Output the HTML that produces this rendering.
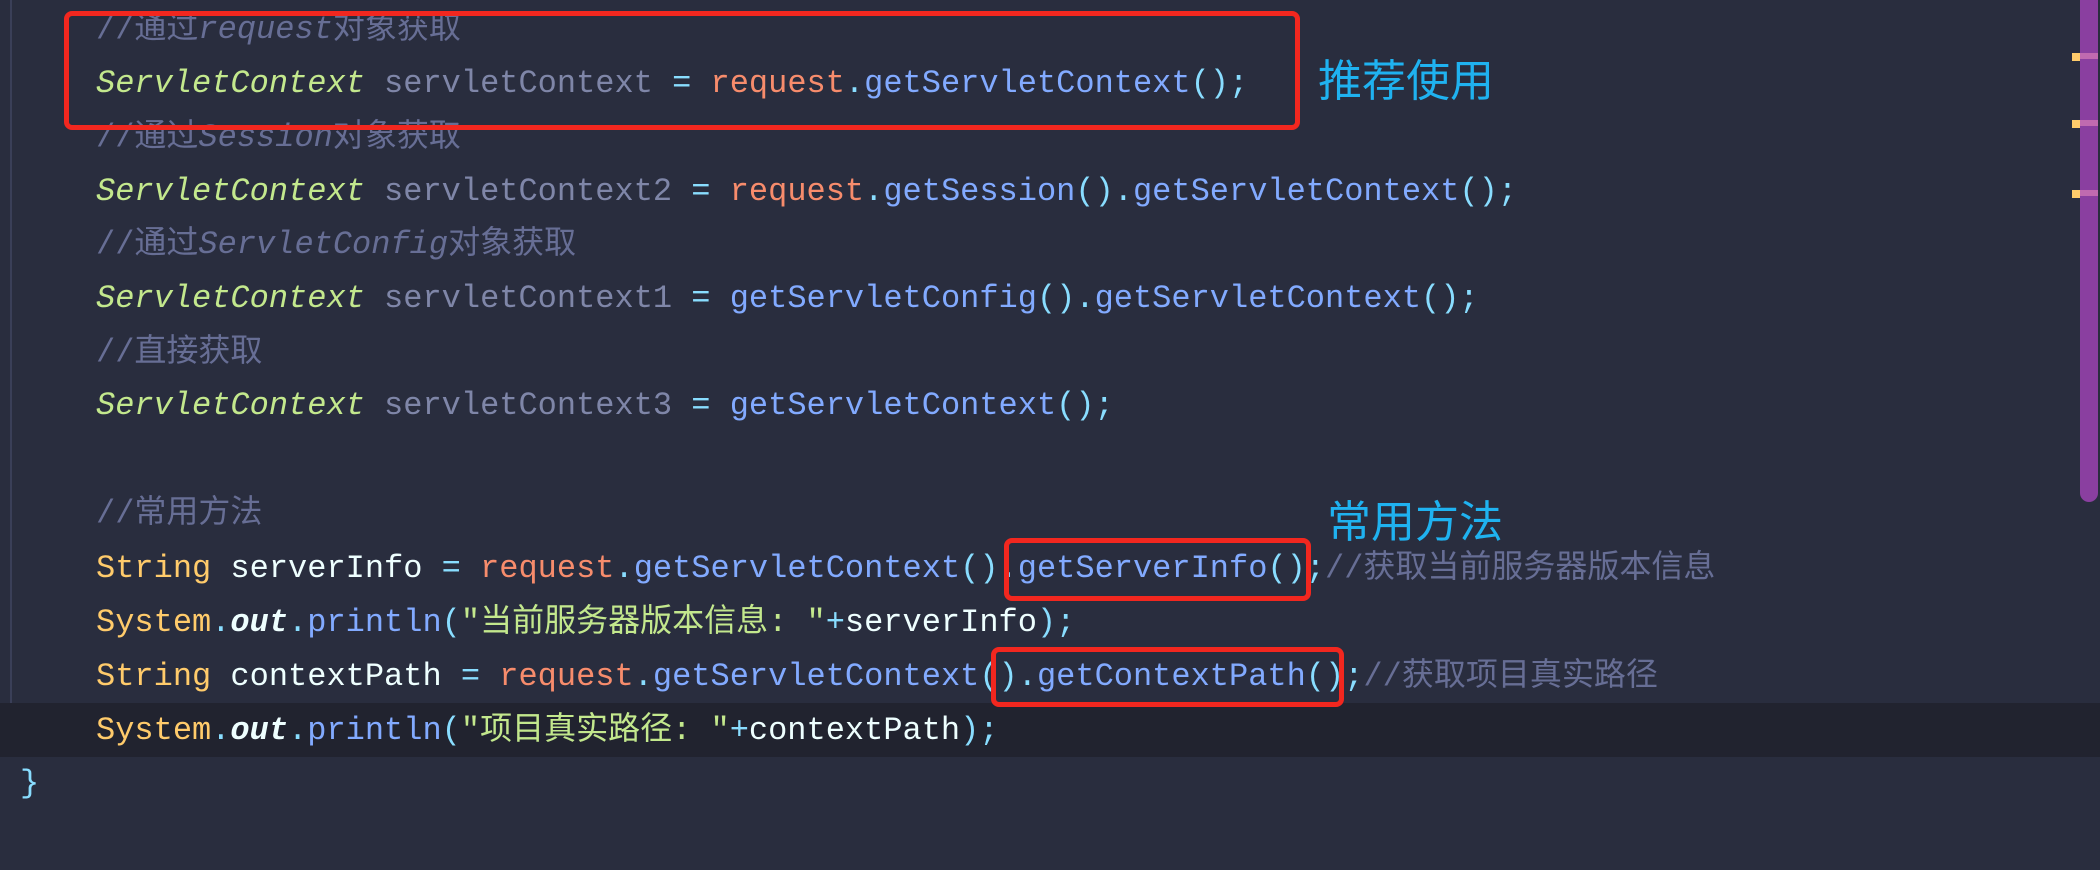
<!DOCTYPE html>
<html><head><meta charset="utf-8"><style>
body{margin:0;width:2100px;height:870px;background:#292d3e;overflow:hidden;position:relative;font-family:"Liberation Mono","Noto Sans CJK SC",monospace;font-size:32px}
.l{position:absolute;left:96px;height:54px;line-height:54px;white-space:pre}
.c{color:#676e95}.c i{font-style:italic}
.t{color:#c3e88d;font-style:italic}
.v{color:#7f86a8}
.o{color:#89ddff}
.r{color:#f78c6c}
.m{color:#82aaff}
.y{color:#ffcb6b}
.w{color:#eeffff}
.s{color:#c3e88d}
.b{color:#eeffff;font-style:italic;font-weight:bold}
.box{position:absolute;border:5px solid #f2271f;border-radius:8px;box-sizing:border-box}
.lab{position:absolute;color:#1fb2f0;font-family:"Noto Sans CJK SC",sans-serif;font-size:44px;line-height:50px}
</style></head><body>
<div style="position:absolute;left:10px;top:0;width:2px;height:757px;background:#3a3f58"></div>
<div style="position:absolute;left:0;top:703px;width:2100px;height:54px;background:#21232f"></div>
<div style="position:absolute;left:2080px;top:0;width:18px;height:502px;background:#8a3fa0;border-radius:0 0 9px 9px"></div>
<div style="position:absolute;left:2072px;top:53px;width:8px;height:8px;background:#ffcb6b"></div>
<div style="position:absolute;left:2080px;top:53px;width:18px;height:6px;background:#c06ab0"></div>
<div style="position:absolute;left:2072px;top:120px;width:8px;height:8px;background:#ffcb6b"></div>
<div style="position:absolute;left:2080px;top:120px;width:18px;height:6px;background:#c06ab0"></div>
<div style="position:absolute;left:2072px;top:190px;width:8px;height:8px;background:#ffcb6b"></div>
<div style="position:absolute;left:2080px;top:190px;width:18px;height:6px;background:#c06ab0"></div>

<div class="l c" style="top:3px">//通过<i>request</i>对象获取</div>
<div class="l" style="top:57px"><span class="t">ServletContext</span> <span class="v">servletContext</span> <span class="o">=</span> <span class="r">request</span><span class="o">.</span><span class="m">getServletContext</span><span class="o">();</span></div>
<div class="l c" style="top:111px">//通过<i>Session</i>对象获取</div>
<div class="l" style="top:165px"><span class="t">ServletContext</span> <span class="v">servletContext2</span> <span class="o">=</span> <span class="r">request</span><span class="o">.</span><span class="m">getSession</span><span class="o">().</span><span class="m">getServletContext</span><span class="o">();</span></div>
<div class="l c" style="top:218px">//通过<i>ServletConfig</i>对象获取</div>
<div class="l" style="top:272px"><span class="t">ServletContext</span> <span class="v">servletContext1</span> <span class="o">=</span> <span class="m">getServletConfig</span><span class="o">().</span><span class="m">getServletContext</span><span class="o">();</span></div>
<div class="l c" style="top:326px">//直接获取</div>
<div class="l" style="top:379px"><span class="t">ServletContext</span> <span class="v">servletContext3</span> <span class="o">=</span> <span class="m">getServletContext</span><span class="o">();</span></div>
<div class="l c" style="top:487px">//常用方法</div>
<div class="l" style="top:542px"><span class="y">String</span> <span class="w">serverInfo</span> <span class="o">=</span> <span class="r">request</span><span class="o">.</span><span class="m">getServletContext</span><span class="o">().</span><span class="m">getServerInfo</span><span class="o">();</span><span class="c">//获取当前服务器版本信息</span></div>
<div class="l" style="top:596px"><span class="y">System</span><span class="o">.</span><span class="b">out</span><span class="o">.</span><span class="m">println</span><span class="o">(</span><span class="s">"当前服务器版本信息: "</span><span class="o">+</span><span class="w">serverInfo</span><span class="o">);</span></div>
<div class="l" style="top:650px"><span class="y">String</span> <span class="w">contextPath</span> <span class="o">=</span> <span class="r">request</span><span class="o">.</span><span class="m">getServletContext</span><span class="o">().</span><span class="m">getContextPath</span><span class="o">();</span><span class="c">//获取项目真实路径</span></div>
<div class="l" style="top:704px"><span class="y">System</span><span class="o">.</span><span class="b">out</span><span class="o">.</span><span class="m">println</span><span class="o">(</span><span class="s">"项目真实路径: "</span><span class="o">+</span><span class="w">contextPath</span><span class="o">);</span></div>
<div class="l o" style="top:757px;left:20px">}</div>

<div class="box" style="left:64px;top:11px;width:1236px;height:119px"></div>
<div class="box" style="left:1004px;top:538px;width:307px;height:63px"></div>
<div class="box" style="left:991px;top:647px;width:353px;height:60px"></div>
<div class="lab" style="left:1318px;top:52px">推荐使用</div>
<div class="lab" style="left:1327px;top:493px">常用方法</div>
</body></html>
